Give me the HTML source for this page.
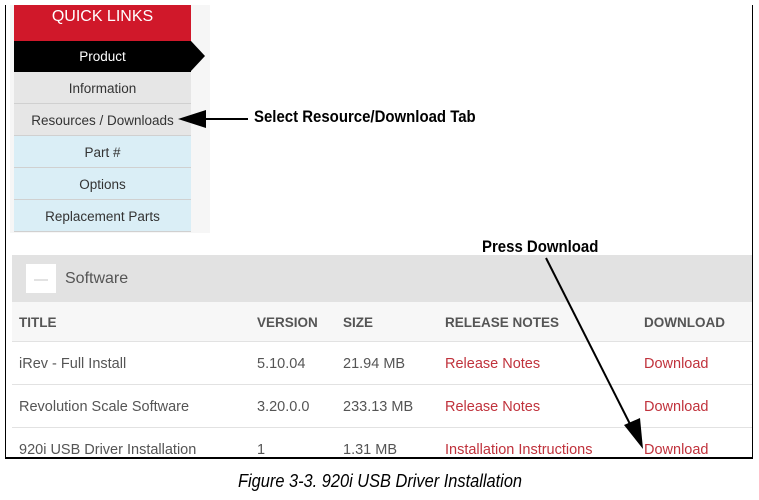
<!DOCTYPE html>
<html><head><style>
body{margin:0;width:759px;height:500px;background:#fff;position:relative;overflow:hidden;font-family:"Liberation Sans",sans-serif}
.a{position:absolute}
.frame{left:5px;top:5px;width:748px;height:453px;border:1.5px solid #000;border-top:none;box-sizing:border-box}
.ql{left:14px;width:177px;text-align:center;font-size:13.5px;color:#333;box-sizing:border-box;border-bottom:1px solid #d0d0d0}
.c{font-size:14.5px;color:#555}
.r{color:#c0323c}
.row{left:12px;width:740px;border-top:1px solid #e2e2e2}
</style></head><body>
<div class="a frame"></div>
<div class="a" style="left:10px;top:5px;width:200px;height:228px;background:#f6f6f6"></div>
<div class="a" style="left:14px;top:5px;width:177px;height:36px;background:#d0182a;color:#fff;font-size:16px;text-align:center;line-height:24px">QUICK LINKS</div>
<div class="a ql" style="top:41px;height:31px;line-height:31px;background:#000;color:#fff;border:none">Product</div>
<div class="a" style="left:191px;top:41px;width:0;height:0;border-top:15.5px solid transparent;border-bottom:15.5px solid transparent;border-left:14px solid #000"></div>
<div class="a ql" style="top:72px;height:32px;line-height:33px;background:#e6e6e6">Information</div>
<div class="a ql" style="top:104px;height:32px;line-height:33px;background:#e6e6e6">Resources / Downloads</div>
<div class="a ql" style="top:136px;height:32px;line-height:33px;background:#daeef6">Part #</div>
<div class="a ql" style="top:168px;height:32px;line-height:33px;background:#daeef6">Options</div>
<div class="a ql" style="top:200px;height:32px;line-height:33px;background:#daeef6">Replacement Parts</div>
<div class="a" style="left:254px;top:107px;font-size:17px;font-weight:bold;transform:scaleX(.88);transform-origin:left">Select Resource/Download Tab</div>
<div class="a" style="left:482px;top:237px;font-size:17px;font-weight:bold;transform:scaleX(.88);transform-origin:left">Press Download</div>
<div class="a" style="left:12px;top:255px;width:740px;height:47px;background:#e2e2e2"></div>
<div class="a" style="left:26px;top:264px;width:30px;height:29px;background:#fff"></div>
<div class="a" style="left:34px;top:279px;width:14px;height:2px;background:#e2e2e2"></div>
<div class="a" style="left:65px;top:270px;font-size:16px;color:#555">Software</div>
<div class="a" style="left:12px;top:302px;width:740px;height:39px;background:#f7f7f7"></div>
<div class="a c" style="top:315px;left:19px;font-size:13.5px;font-weight:bold;color:#555">TITLE</div>
<div class="a c" style="top:315px;left:257px;font-size:13.5px;font-weight:bold;color:#555">VERSION</div>
<div class="a c" style="top:315px;left:343px;font-size:13.5px;font-weight:bold;color:#555">SIZE</div>
<div class="a c" style="top:315px;left:445px;font-size:13.5px;font-weight:bold;color:#555">RELEASE NOTES</div>
<div class="a c" style="top:315px;left:644px;font-size:13.5px;font-weight:bold;color:#555">DOWNLOAD</div>
<div class="a row" style="top:341px"></div>
<div class="a row" style="top:384px"></div>
<div class="a row" style="top:427px"></div>
<div class="a c" style="top:356px;left:19px">iRev - Full Install</div>
<div class="a c" style="top:356px;left:257px">5.10.04</div>
<div class="a c" style="top:356px;left:343px">21.94 MB</div>
<div class="a c r" style="top:356px;left:445px">Release Notes</div>
<div class="a c r" style="top:356px;left:644px">Download</div>
<div class="a c" style="top:399px;left:19px">Revolution Scale Software</div>
<div class="a c" style="top:399px;left:257px">3.20.0.0</div>
<div class="a c" style="top:399px;left:343px">233.13 MB</div>
<div class="a c r" style="top:399px;left:445px">Release Notes</div>
<div class="a c r" style="top:399px;left:644px">Download</div>
<div class="a c" style="top:442px;left:19px">920i USB Driver Installation</div>
<div class="a c" style="top:442px;left:257px">1</div>
<div class="a c" style="top:442px;left:343px">1.31 MB</div>
<div class="a c r" style="top:442px;left:445px">Installation Instructions</div>
<div class="a c r" style="top:442px;left:644px">Download</div>
<div class="a" style="left:0;top:458px;width:759px;height:42px;background:#fff"></div>
<div class="a" style="left:5px;top:458px;width:748px;border-top:1.5px solid #000"></div>
<div class="a" style="left:238px;top:471px;font-size:18px;font-style:italic;transform:scaleX(.91);transform-origin:left">Figure 3-3. 920i USB Driver Installation</div>
<svg class="a" style="left:0;top:0" width="759" height="500">
<line x1="248" y1="119" x2="200" y2="119" stroke="#000" stroke-width="2"/>
<polygon points="178,119 206,110 206,128" fill="#000"/>
<line x1="546" y1="258" x2="632" y2="428" stroke="#000" stroke-width="2"/>
<polygon points="643,449 624,425 640,418" fill="#000"/>
</svg>
</body></html>
